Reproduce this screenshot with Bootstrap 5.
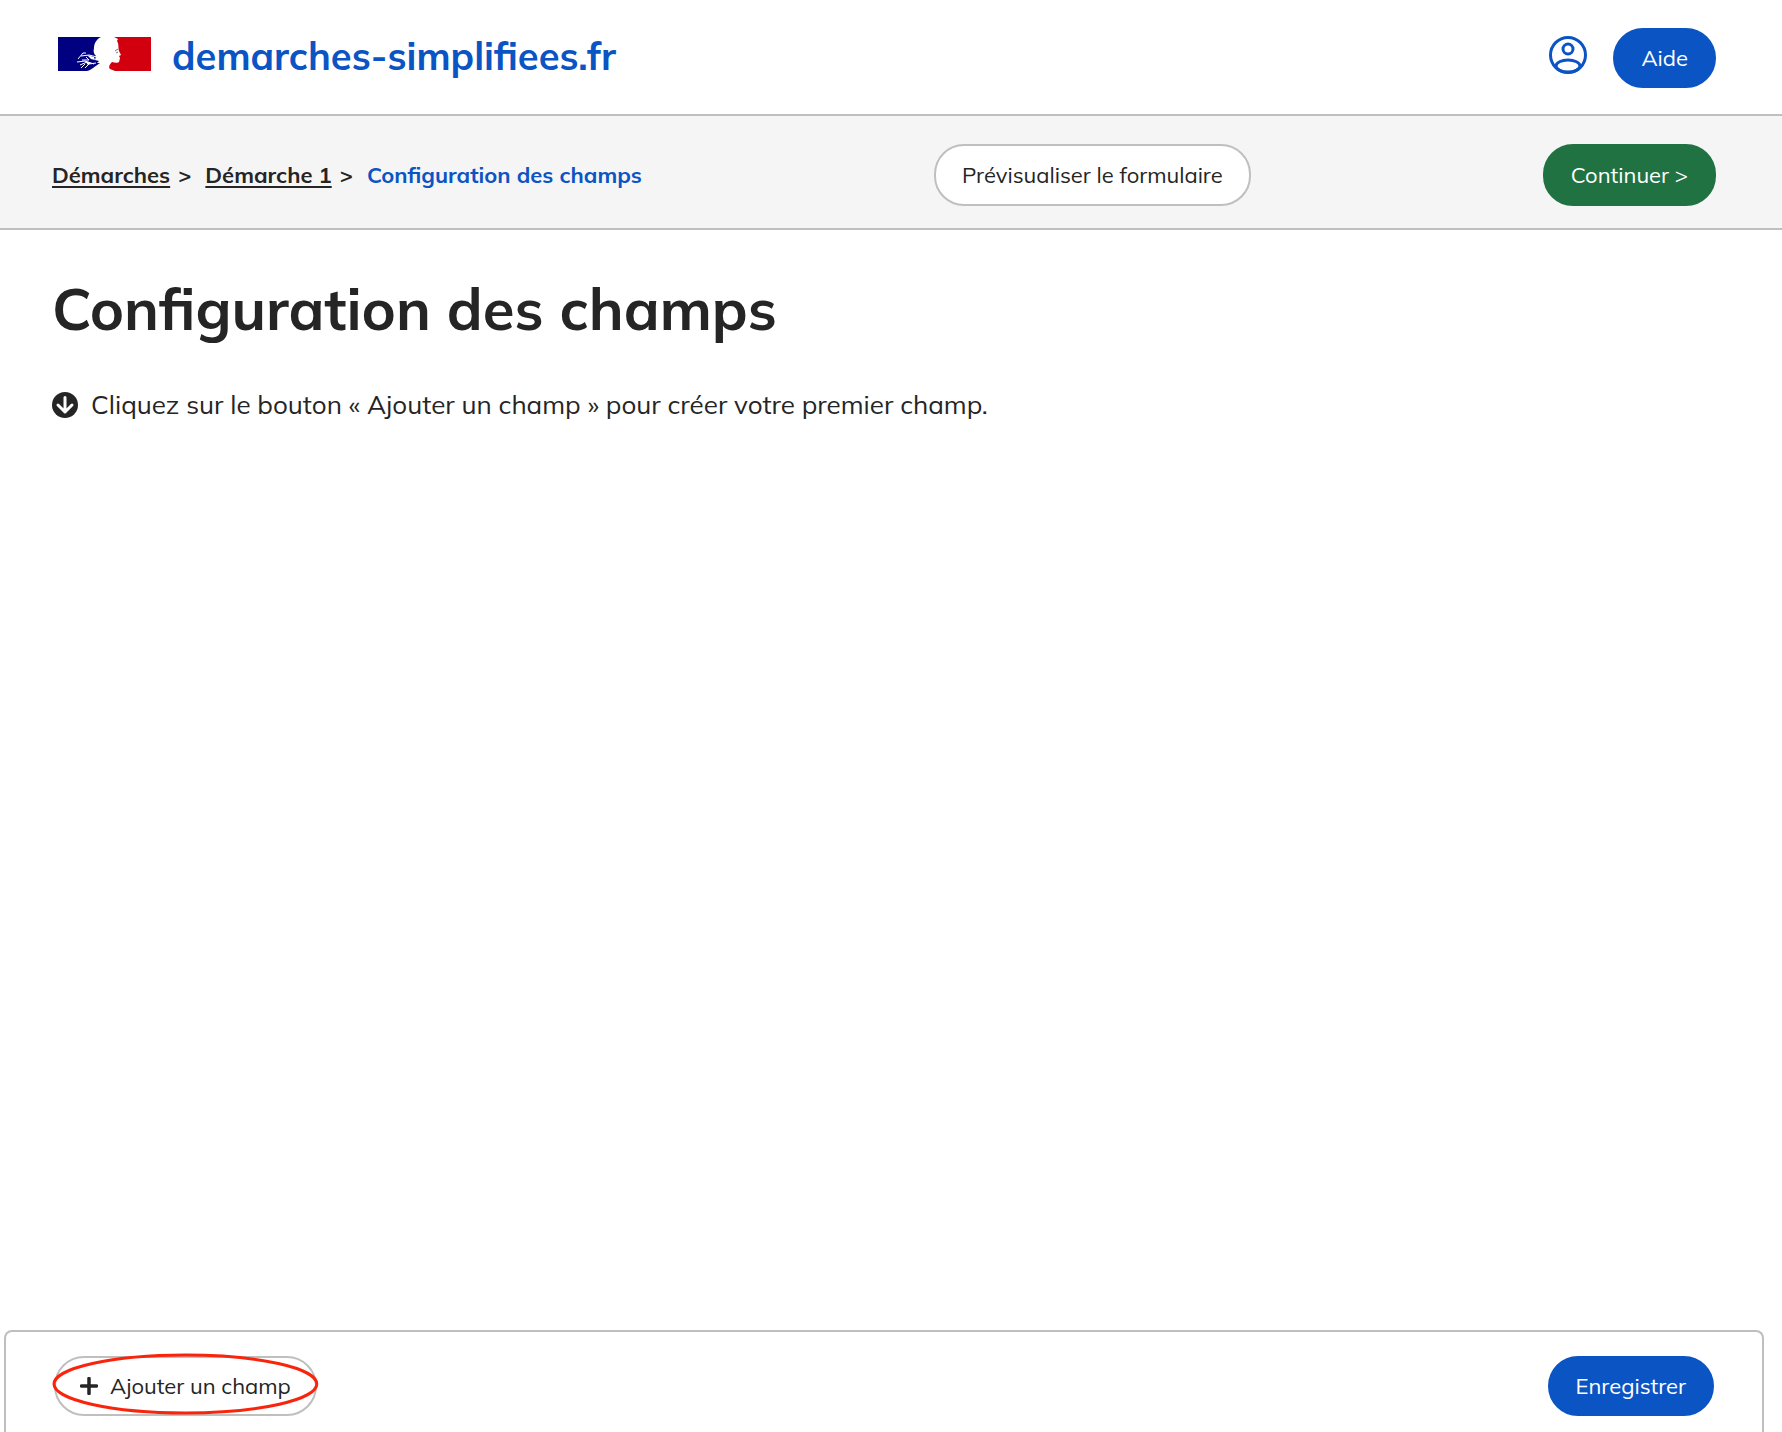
<!DOCTYPE html>
<html lang="fr">
<head>
<meta charset="utf-8">
<meta name="viewport" content="width=device-width, initial-scale=1">
<title>Configuration des champs</title>
<link href="https://cdn.jsdelivr.net/npm/bootstrap@5.3.0/dist/css/bootstrap.min.css" rel="stylesheet">
<style>
  :root { --ds-blue: #0b54c4; --ds-grey: #bfbfbf; --ds-ink: #252525; }
  body { font-family: Muli, Mulish, Lato, "Open Sans", sans-serif; font-size: 22px; color: var(--ds-ink); background: #fff; }
  .page-gutter { padding-left: 52px; padding-right: 66px; }
  .site-header { height: 116px; padding-top: 2px; border-bottom: 2px solid var(--ds-grey); }
  .site-logo { padding: 0; gap: 21px; margin-left: 6px; color: var(--ds-blue) !important; font-size: 38px; font-weight: 700; line-height: 48px; }
  .site-logo svg { margin-top: -8px; }
  .site-logo span { margin-top: -4px; }
  .account-link { color: var(--ds-blue); line-height: 0; margin-top: -6px; }
  .sub-header { height: 114px; padding-top: 6px; background: #f5f5f5; border-bottom: 2px solid var(--ds-grey); }
  .breadcrumb { --bs-breadcrumb-divider: ">"; --bs-breadcrumb-divider-color: var(--ds-ink); --bs-breadcrumb-item-padding-x: 8px; font-weight: 700; }
  .breadcrumb-item + .breadcrumb-item::before { padding-right: 14px; }
  .breadcrumb a { color: var(--ds-ink); text-underline-offset: 3px; text-decoration-thickness: 2px; }
  .breadcrumb .active { color: var(--ds-blue); }
  .ds-btn { --bs-btn-font-size: 22px; --bs-btn-line-height: 32px; --bs-btn-padding-x: 26px; --bs-btn-padding-y: 12px; --bs-btn-border-width: 2px; --bs-btn-border-radius: 30px; }
  .ds-btn-tall { --bs-btn-padding-y: 13px; }
  .ds-btn-icon { --bs-btn-padding-x: 24px; }
  .ds-primary { --bs-btn-color: #fff; --bs-btn-bg: var(--ds-blue); --bs-btn-border-color: var(--ds-blue); --bs-btn-hover-color: #fff; --bs-btn-hover-bg: #08429a; }
  .ds-success { --bs-btn-color: #fff; --bs-btn-bg: #217242; --bs-btn-border-color: #217242; --bs-btn-hover-color: #fff; --bs-btn-hover-bg: #185632; }
  .ds-plain { --bs-btn-color: var(--ds-ink); --bs-btn-bg: #fff; --bs-btn-border-color: var(--ds-grey); --bs-btn-hover-color: var(--ds-ink); --bs-btn-hover-bg: #f5f5f5; }
  .page-title { font-size: 58px; font-weight: 700; line-height: 72px; margin: 43px 0 43px; }
  .page-hint { font-size: 26px; line-height: 34px; gap: 13px; }
  .actions-bar { margin: 0 18px 0 4px; padding: 24px 48px 16px; border: 2px solid var(--ds-grey); border-bottom: 0; border-radius: 8px 8px 0 0; }
  .add-ring { left: 0; top: -2px; width: 100%; height: 60px; overflow: visible; pointer-events: none; }
</style>
<script src="https://cdn.jsdelivr.net/npm/bootstrap@5.3.0/dist/js/bootstrap.bundle.min.js"></script>
</head>
<body class="d-flex flex-column min-vh-100">
<header class="site-header page-gutter d-flex align-items-center justify-content-between">
  <a class="navbar-brand site-logo d-flex align-items-center" href="#">
    <svg width="93" height="34" viewBox="0 0 93 34" aria-hidden="true">
      <path fill="#000080" d="M0 0H43C39 2 36 6 36 11C35 15 36 17 38 19L37 23L41 24L39 26L42 26C37 29 34 33 29 34H0Z"/>
      <path fill="#d2000f" d="M56 0H93V34H57L52 32C50 30 52 27 54 25C57 26 60 26 61 25L62 21L61 19L63 18L61 14C60 10 61 7 59 4L60 2Z"/>
      <path fill="none" stroke="#fff" stroke-width="1" d="M20 22L25 16H28M23 19L31 18L39 20M19 25L27 24L36 27M22 28L29 25M23 31L27 27M27 31L31 27L38 26M24 23L31 23L28 20"/>
      <path fill="#fff" d="M29 18L36 20L37 23L33 22ZM27 24L33 26L30 28Z"/>
      <path fill="none" stroke="#777" stroke-width="1" d="M57 14L60 12M58 16L60 15"/>
    </svg>
    <span>demarches-simplifiees.fr</span>
  </a>
  <div class="d-flex align-items-center" style="gap: 26px">
    <a class="account-link" href="#" aria-label="Mon compte">
      <svg width="38" height="38" viewBox="0 0 38 38" fill="none" stroke="currentColor" stroke-width="3" aria-hidden="true">
        <circle cx="19" cy="19" r="17.5"/><circle cx="19" cy="13" r="5"/><ellipse cx="19" cy="30" rx="12" ry="6"/>
      </svg>
    </a>
    <button type="button" class="btn ds-btn ds-primary">Aide</button>
  </div>
</header>
<div class="sub-header page-gutter d-flex align-items-center justify-content-between">
  <nav aria-label="Fil d'Ariane">
    <ol class="breadcrumb mb-0">
      <li class="breadcrumb-item"><a href="#">Démarches</a></li>
      <li class="breadcrumb-item"><a href="#">Démarche 1</a></li>
      <li class="breadcrumb-item active" aria-current="page">Configuration des champs</li>
    </ol>
  </nav>
  <button type="button" class="btn ds-btn ds-btn-tall ds-plain">Prévisualiser le formulaire</button>
  <button type="button" class="btn ds-btn ds-btn-tall ds-success">Continuer &gt;</button>
</div>
<main class="page-gutter flex-grow-1">
  <h1 class="page-title">Configuration des champs</h1>
  <p class="page-hint d-flex align-items-center">
    <svg width="26" height="26" viewBox="0 0 26 26" aria-hidden="true">
      <circle cx="13" cy="13" r="13" fill="#252525"/>
      <path d="M13 5.5V20M6 13L13 20L20 13" fill="none" stroke="#fff" stroke-width="3" stroke-linecap="round" stroke-linejoin="round"/>
    </svg>
    <span>Cliquez sur le bouton « Ajouter un champ » pour créer votre premier champ.</span>
  </p>
</main>
<div class="actions-bar d-flex align-items-center justify-content-between">
  <div class="position-relative">
    <button type="button" class="btn ds-btn ds-btn-icon ds-plain d-flex align-items-center" style="gap: 12px">
      <svg width="18" height="18" viewBox="0 0 18 18" aria-hidden="true"><path d="M9 1.5V16.5M1.5 9H16.5" stroke="#252525" stroke-width="3.5" stroke-linecap="round"/></svg>
      <span>Ajouter un champ</span>
    </button>
    <svg class="add-ring position-absolute" aria-hidden="true"><ellipse cx="50%" cy="50%" rx="50%" ry="29" fill="none" stroke="#f9240c" stroke-width="3"/></svg>
  </div>
  <button type="button" class="btn ds-btn ds-primary">Enregistrer</button>
</div>
</body>
</html>
